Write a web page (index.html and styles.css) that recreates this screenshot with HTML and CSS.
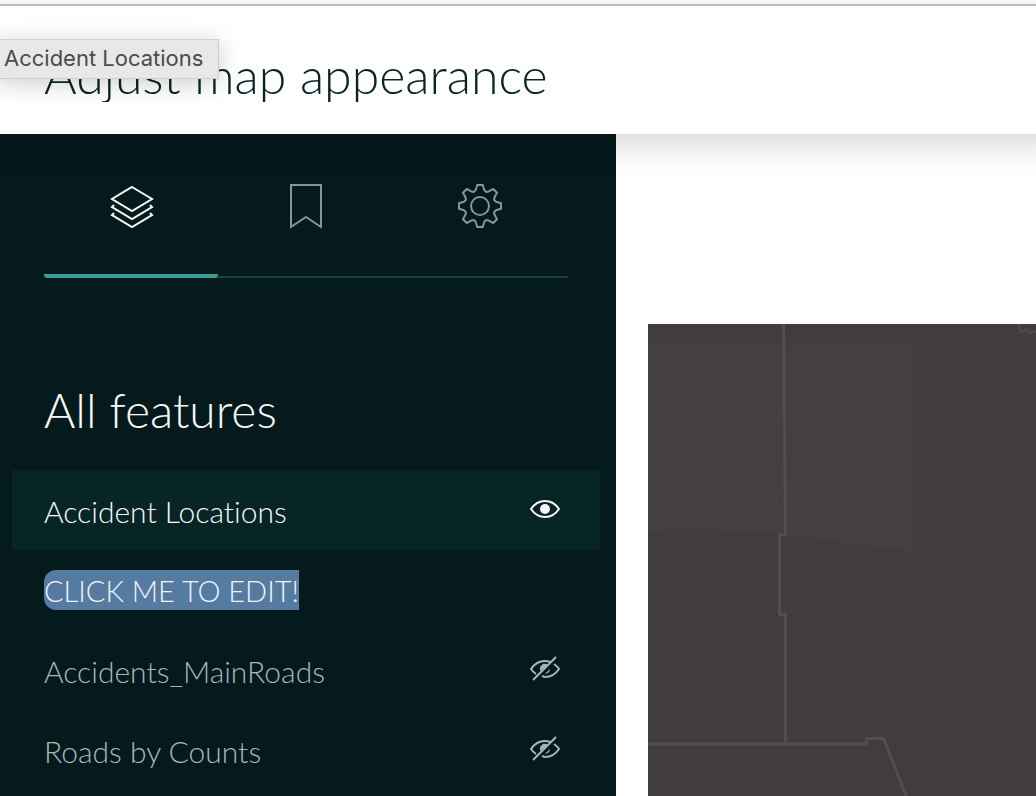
FILE: index.html
```html
<!DOCTYPE html>
<html lang="en">
<head>
<meta charset="utf-8">
<title>Adjust map appearance</title>
<link rel="stylesheet" href="styles.css">
</head>
<body>
<svg class="defs" aria-hidden="true">
  <symbol id="eye" viewBox="0 0 32 28">
    <path d="M2 14C6 8 11 6 16 6s10 2 14 8c-4 6-9 8-14 8S6 20 2 14z" fill="none" stroke="currentColor" stroke-width="2"/>
    <circle cx="16" cy="14" r="5" fill="currentColor"/>
  </symbol>
  <symbol id="eye-off" viewBox="0 0 32 28">
    <path d="M7 19Q4 17 2 14C6 8 11 6 16 6q3 0 5 1M25 9q3 2 5 5c-4 6-9 8-14 8l-3-1M4 25L27 2" fill="none" stroke="currentColor" stroke-width="2"/>
    <path d="M11.500 16a5 5 0 0 1 7-6.500zM21 14a5 5 0 0 1-5 5z" fill="currentColor"/>
  </symbol>
</svg>
<div class="page">
  <div class="window-edge"></div>
  <header class="header">
    <h1 class="title">Adjust map appearance</h1>
    <div class="tooltip" role="tooltip">Accident Locations</div>
  </header>
  <main class="content">
    <aside class="sidebar">
      <nav class="tabs" aria-label="Map panels">
        <button class="tab tab-active" type="button" aria-label="Layers">
          <svg class="tab-icon" viewBox="-24 -24 48 48"><path d="M0-19L20-7 0 5-20-7zM-18-1l-2 2L0 13 20 1l-2-2M-18 7l-2 2L0 21 20 9l-2-2"/></svg>
        </button>
        <button class="tab" type="button" aria-label="Bookmarks">
          <svg class="tab-icon" viewBox="-24 -24 48 48"><path d="M-15-21H15V21L0 11-15 21z"/></svg>
        </button>
        <button class="tab" type="button" aria-label="Settings">
          <svg class="tab-icon" viewBox="-24 -24 48 48"><path d="M-2.7-21H2.7L4.3-16Q5.5-13.4 8.3-14.4L13.2-17 17-13.2 14.4-8.3Q13.4-5.5 16-4.3L21-2.7V2.7L16 4.3Q13.4 5.5 14.4 8.3L17 13.2 13.2 17 8.3 14.4Q5.5 13.4 4.3 16L2.7 21H-2.7L-4.3 16Q-5.5 13.4-8.3 14.4L-13.2 17-17 13.2-14.4 8.3Q-13.4 5.5-16 4.3L-21 2.7V-2.7L-16-4.3Q-13.4-5.5-14.4-8.3L-17-13.2-13.2-17-8.3-14.4Q-5.5-13.4-4.3-16z"/><circle r="9"/></svg>
        </button>
      </nav>
      <h2 class="section-title">All features</h2>
      <ul class="features">
        <li class="feature feature-active">
          <span class="feature-name">Accident Locations</span>
          <button class="toggle" type="button" aria-label="Hide Accident Locations"><svg class="eye"><use href="#eye"/></svg></button>
        </li>
        <li class="feature">
          <button class="edit-name" type="button">CLICK ME TO EDIT!</button>
        </li>
        <li class="feature">
          <span class="feature-name">Accidents_MainRoads</span>
          <button class="toggle" type="button" aria-label="Show Accidents_MainRoads"><svg class="eye"><use href="#eye-off"/></svg></button>
        </li>
        <li class="feature">
          <span class="feature-name">Roads by Counts</span>
          <button class="toggle" type="button" aria-label="Show Roads by Counts"><svg class="eye"><use href="#eye-off"/></svg></button>
        </li>
      </ul>
    </aside>
    <section class="map" aria-label="Map">
      <svg class="map-art" viewBox="0 0 388 472" preserveAspectRatio="xMinYMin slice">
        <path class="map-area" d="M0 21H264L266 228Q190 218 130 208 100 205 0 206z"/>
        <path class="map-line" d="M135.500 0L137.500 211H131.500V290.500H137.500V420M0 420H218.500V414.500H235.500L259 474"/>
        <path class="map-line map-line-faint" d="M370 0L373 8 379 5 382 9 389 7"/>
      </svg>
    </section>
  </main>
</div>
</body>
</html>
```
FILE: styles.css
```css
* {
  box-sizing: border-box;
}

body {
  margin: 0;
  background: #fff;
  font-family: Lato, "Open Sans", sans-serif;
  font-variant-ligatures: none;
}

button {
  margin: 0;
  padding: 0;
  border: 0;
  background: none;
  color: inherit;
  font: inherit;
}

.defs {
  display: none;
}

.page {
  display: flex;
  flex-direction: column;
  height: 100vh;
  overflow: hidden;
}

.window-edge {
  flex: none;
  height: 6px;
  background: #f5f5f5;
  border-bottom: 2px solid #bababa;
}

.header {
  position: relative;
  z-index: 1;
  flex: none;
  padding: 44px 44px 32px;
  background: #fff;
  box-shadow: 0 -24px 36px 28px rgba(0, 0, 0, 0.22);
  clip-path: inset(0 0 -60px 0);
}

.title {
  margin: 0;
  overflow: hidden;
  color: #072525;
  font-size: 50px;
  font-weight: 300;
  line-height: 50px;
  padding-bottom: 2px;
  white-space: nowrap;
}

.tooltip {
  position: absolute;
  top: 33px;
  left: -4px;
  padding: 0 15px 2px 7px;
  border: 1px solid #cfcfcf;
  background: #e8e8e8;
  box-shadow: 0 4px 24px rgba(0, 0, 0, 0.2);
  color: #4b4b4b;
  font-family: Inter, sans-serif;
  font-size: 22px;
  line-height: 36px;
  white-space: nowrap;
}

.content {
  display: flex;
  flex: 1;
  min-height: 0;
}

.sidebar {
  flex: none;
  width: 616px;
  padding: 0 16px 0 12px;
  background: #051a1c;
  color: #a3b9b9;
}

.tabs {
  display: flex;
  margin: 0 32px;
  padding-right: 2px;
  border-bottom: 2px solid #1b403f;
}

.tab {
  display: flex;
  flex: 1;
  justify-content: center;
  height: 144px;
  margin-bottom: -2px;
  padding: 48px 0 0 2px;
  color: #7f9999;
}

.tab-active {
  border-bottom: 4px solid #3f9d98;
  border-radius: 0 0 4px 4px;
  color: #f4f8f8;
}

.tab-icon {
  width: 48px;
  height: 48px;
  fill: none;
  stroke: currentColor;
  stroke-width: 2;
}

.section-title {
  margin: 102px 32px 30px;
  color: #f7f7f7;
  font-size: 48px;
  font-weight: 300;
  line-height: 60px;
}

.features {
  margin: 0;
  padding: 0;
  list-style: none;
}

.feature {
  display: flex;
  align-items: center;
  justify-content: space-between;
  height: 80px;
  padding: 0 39px 0 32px;
  font-size: 30px;
  font-weight: 300;
  line-height: 40px;
}

.feature-name {
  padding-top: 2px;
}

.feature-active {
  background: #082526;
  color: #f4f8f8;
}

.edit-name {
  border-radius: 12px 0 0 12px;
  background: #557ba1;
  color: #f0f4f8;
  font-size: 29px;
  line-height: 38px;
  padding-top: 2px;
}

.toggle {
  padding-bottom: 2px;
}

.eye {
  display: block;
  width: 32px;
  height: 28px;
}

.map {
  flex: 1;
  min-width: 0;
  margin: 190px 0 0 32px;
  overflow: hidden;
  background: #423c41;
}

.map-art {
  display: block;
  width: 100%;
  height: 100%;
}

.map-area {
  fill: #453f3f;
}

.map-line {
  fill: none;
  stroke: #564b4e;
  stroke-width: 3;
}

.map-line-faint {
  stroke: #524b4e;
  stroke-width: 2;
}
```
